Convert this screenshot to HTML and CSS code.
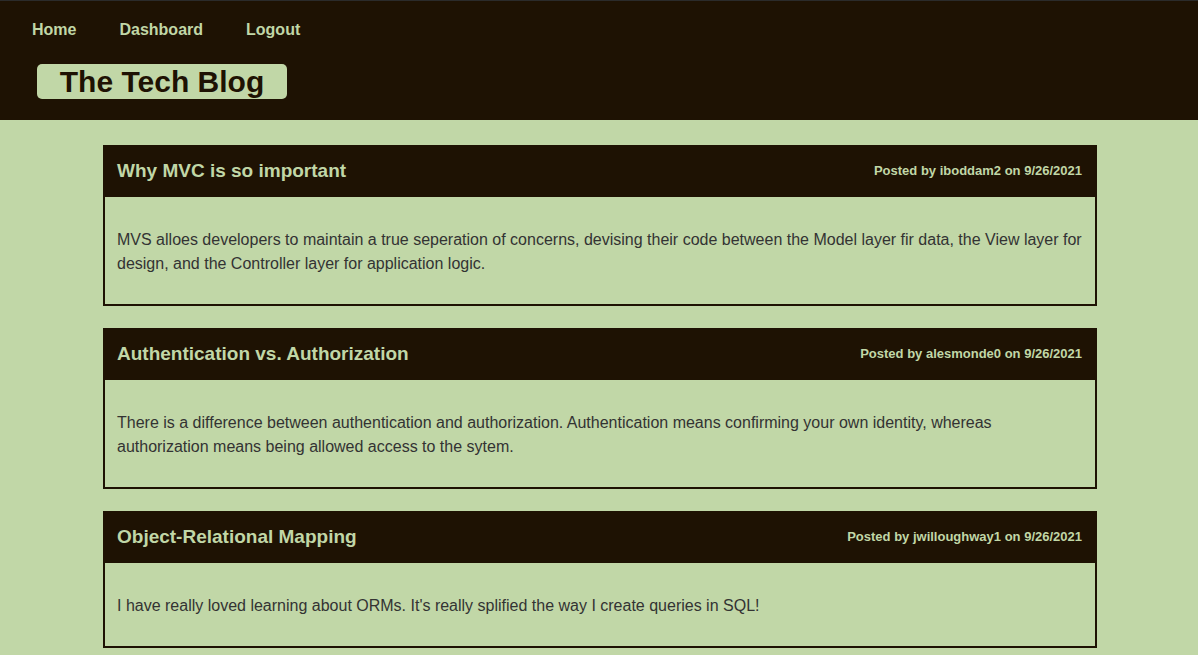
FILE: index.html
```html
<!DOCTYPE html>
<html lang="en">
<head>
<meta charset="utf-8">
<title>The Tech Blog</title>
<link rel="stylesheet" href="styles.css">
</head>
<body>
<header class="site-header">
  <nav class="nav">
    <a href="#">Home</a>
    <a href="#">Dashboard</a>
    <a href="#">Logout</a>
  </nav>
  <h1 class="brand">The Tech Blog</h1>
</header>
<main class="posts">
  <article class="post">
    <header class="post-head">
      <h2><a href="#">Why MVC is so important</a></h2>
      <p class="meta">Posted by iboddam2 on 9/26/2021</p>
    </header>
    <p class="post-body">MVS alloes developers to maintain a true seperation of concerns, devising their code between the Model layer fir data, the View layer for design, and the Controller layer for application logic.</p>
  </article>
  <article class="post">
    <header class="post-head">
      <h2><a href="#">Authentication vs. Authorization</a></h2>
      <p class="meta">Posted by alesmonde0 on 9/26/2021</p>
    </header>
    <p class="post-body">There is a difference between authentication and authorization. Authentication means confirming your own identity, whereas authorization means being allowed access to the sytem.</p>
  </article>
  <article class="post">
    <header class="post-head">
      <h2><a href="#">Object-Relational Mapping</a></h2>
      <p class="meta">Posted by jwilloughway1 on 9/26/2021</p>
    </header>
    <p class="post-body">I have really loved learning about ORMs. It's really splified the way I create queries in SQL!</p>
  </article>
</main>
</body>
</html>
```
FILE: styles.css
```css
* { box-sizing: border-box; }

body {
  margin: 0;
  background: #c1d7a7;
  color: #333333;
  font-family: "Liberation Sans", Arial, sans-serif;
  font-size: 16px;
  line-height: 24px;
}

h1, h2, p { margin: 0; }

a { color: inherit; text-decoration: none; }

.site-header {
  padding: 17px 32px 21px;
  border-top: 1px solid #2b2b2b;
  background: #1e1203;
  color: #c1d7a7;
}

.nav {
  display: flex;
  gap: 43px;
  font-weight: bold;
}

.brand {
  width: 250px;
  margin: 22px 0 0 5px;
  border-radius: 5px;
  background: #c1d7a7;
  color: #1e1203;
  font-size: 30px;
  line-height: 35px;
  text-align: center;
}

.posts {
  display: flex;
  flex-direction: column;
  gap: 22px;
  margin: 25px 101px 8px 103px;
}

.post { border: 2px solid #1e1203; }

.post-head {
  display: flex;
  justify-content: space-between;
  align-items: center;
  padding: 11px 13px 14px 12px;
  background: #1e1203;
  color: #c1d7a7;
}

.post-head h2 { font-size: 19px; line-height: 25px; }

.meta { font-size: 13px; font-weight: bold; }

.post-body { padding: 31px 12px 28px; }
```
